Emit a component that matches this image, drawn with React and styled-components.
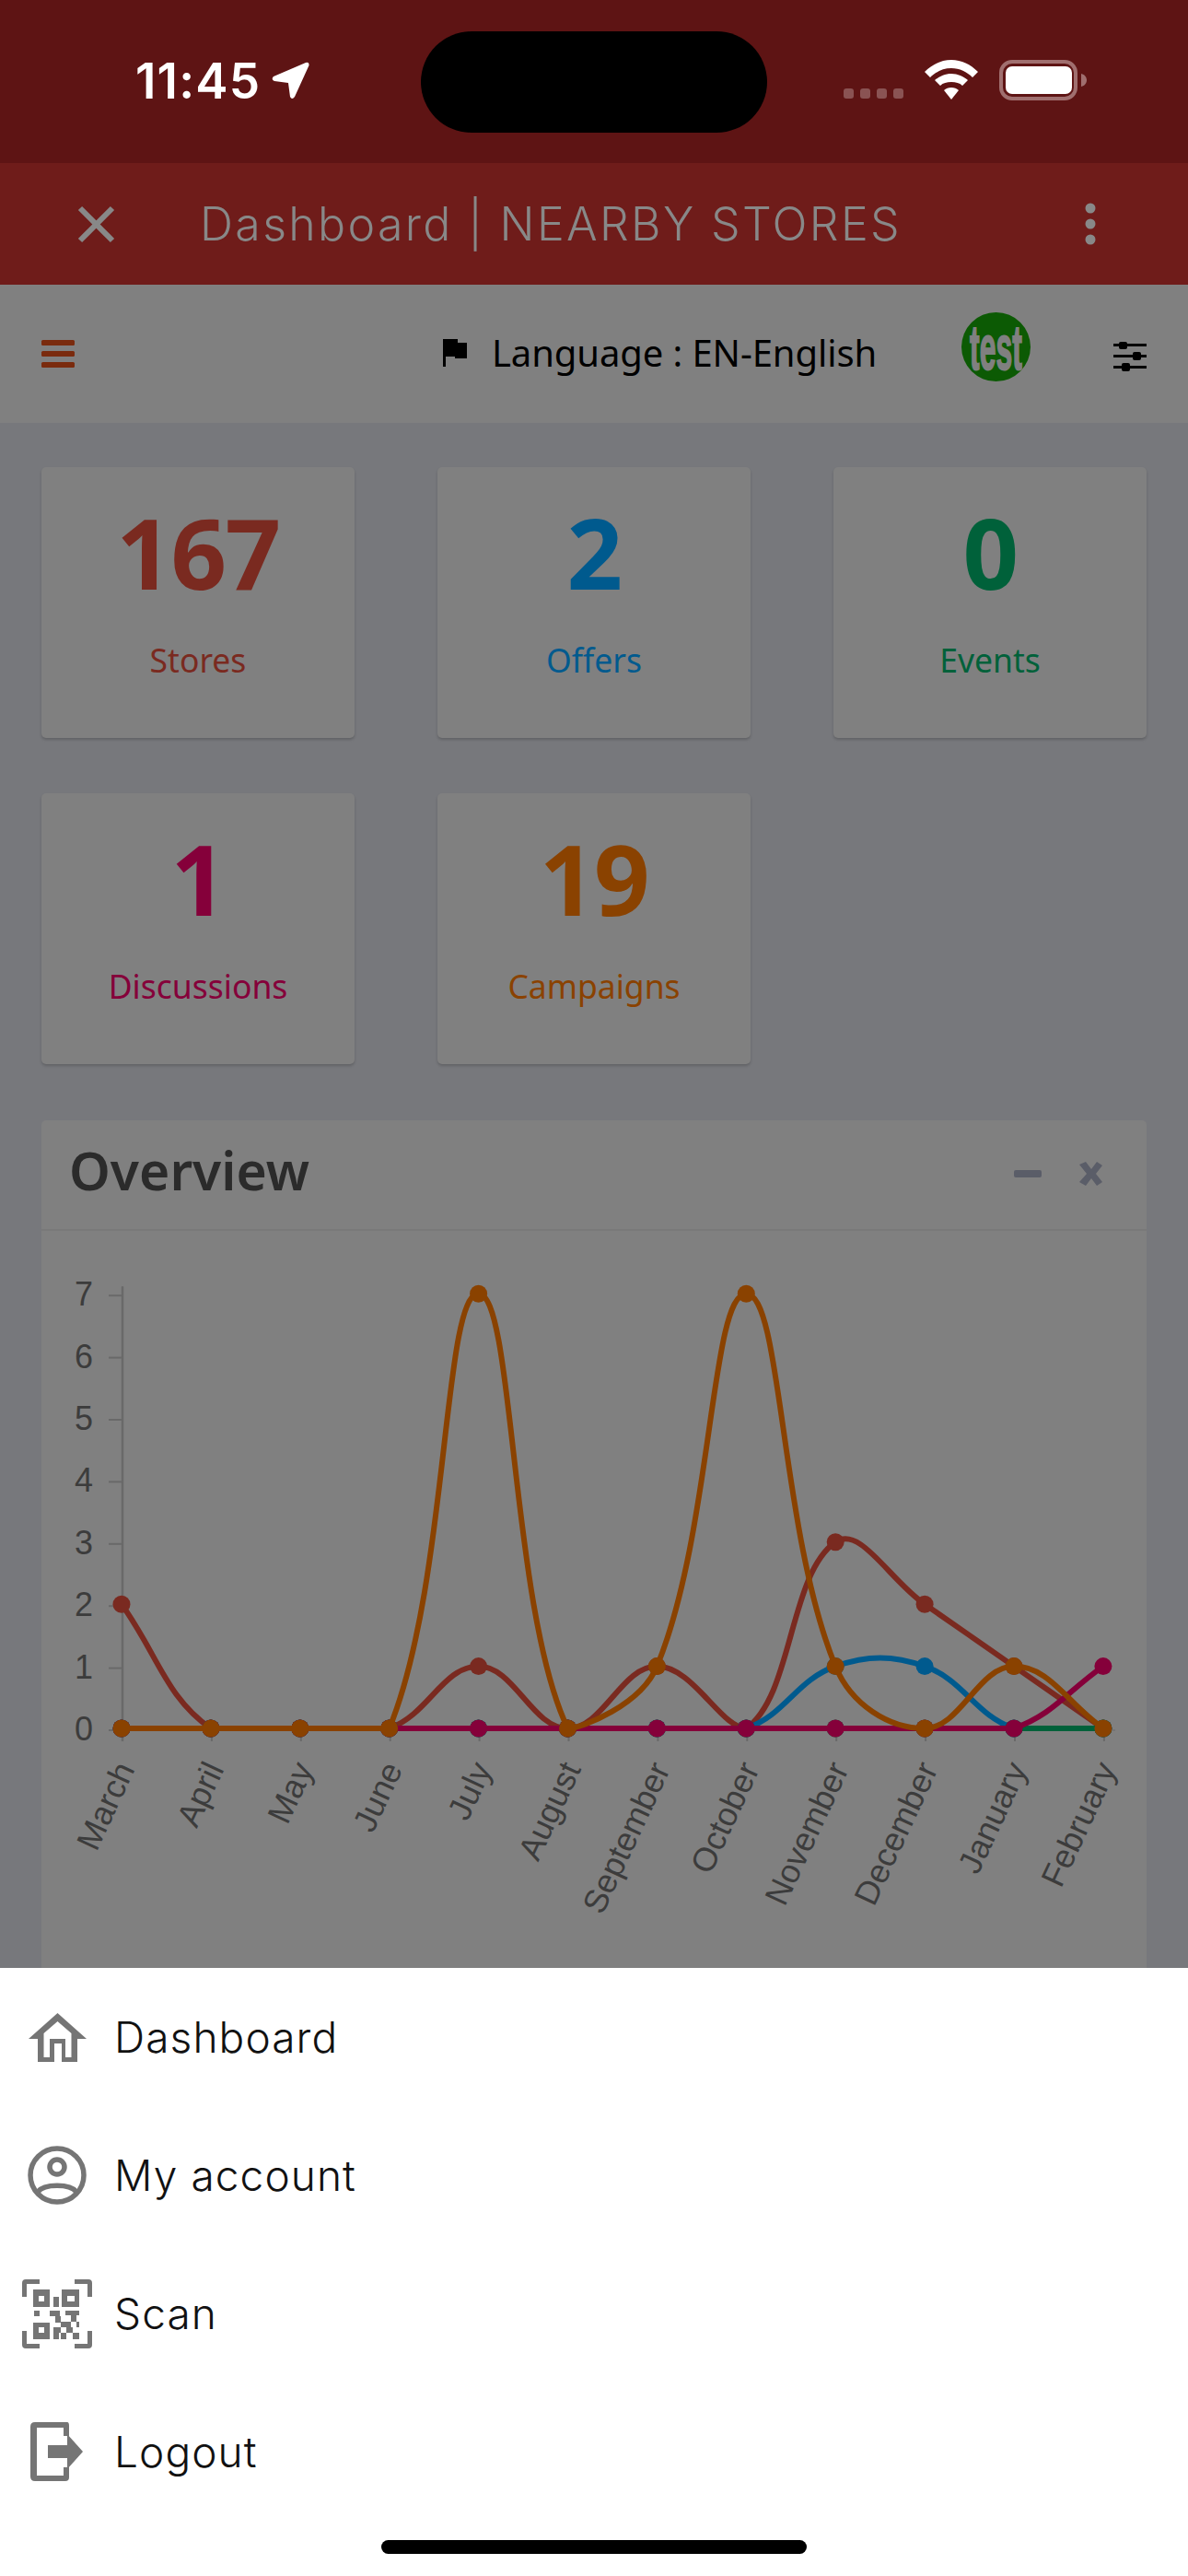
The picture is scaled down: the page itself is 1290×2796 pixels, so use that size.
import React from "react";
import styled, { createGlobalStyle } from "styled-components";

const GlobalStyle = createGlobalStyle`
  html, body {
    margin: 0;
    padding: 0;
    background: #77787c;
  }
  * {
    box-sizing: border-box;
  }
`;

const Screen = styled.div`
  width: 1290px;
  height: 2796px;
  position: relative;
  overflow: hidden;
  background: #77787c;
  font-family: "Noto Sans", sans-serif;
`;

const StatusBar = styled.div`
  height: 177px;
  background: #5e1414;
  display: flex;
  align-items: flex-start;
  color: #fff;
`;

const Time = styled.div`
  width: 310px;
  display: flex;
  align-items: center;
  gap: 12px;
  margin: 63px 0 0 147px;
  font-family: Inter, sans-serif;
  font-weight: 600;
  font-size: 53px;
  line-height: 50px;
  letter-spacing: 1.2px;
`;

const LocationArrow = styled.svg`
  width: 42px;
  height: 42px;
  margin-top: -1px;
`;

const Island = styled.div`
  width: 376px;
  height: 110px;
  margin-top: 34px;
  background: #000;
  border-radius: 55px;
`;

const SignalDots = styled.div`
  display: flex;
  gap: 7px;
  margin: 96px 0 0 83px;
`;

const SignalDot = styled.span`
  width: 11px;
  height: 11px;
  border-radius: 3px;
  background: #8a5353;
`;

const WifiIcon = styled.svg`
  width: 58px;
  height: 43px;
  margin: 65px 0 0 23px;
`;

const BatteryIcon = styled.svg`
  width: 95px;
  height: 44px;
  margin: 65px 0 0 23px;
`;

const AppBar = styled.div`
  height: 132px;
  background: #6f1c1a;
  display: flex;
  align-items: center;
  padding: 0 100px 0 84px;
  color: #888;
`;

const AppBarTitle = styled.div`
  flex: 1;
  margin-left: 92px;
  font-family: Inter, sans-serif;
  font-weight: 300;
  font-size: 50px;
  white-space: nowrap;
  letter-spacing: 2.35px;
`;

const TopBar = styled.div`
  height: 150px;
  background: #808080;
  display: flex;
  align-items: center;
  padding: 0 45px;
`;

const Hamburger = styled.div`
  flex: none;
  width: 36px;
  display: flex;
  flex-direction: column;
  gap: 6px;
`;

const HamburgerBar = styled.span`
  height: 6px;
  border-radius: 1.5px;
  background: #7a2b0e;
`;

const Language = styled.div`
  flex: none;
  width: 471px;
  display: flex;
  align-items: center;
  margin: -3px 0 0 400px;
  color: #000;
  font-size: 40px;
  letter-spacing: -0.1px;
  white-space: nowrap;
`;

const FlagIcon = styled.svg`
  flex: none;
  width: 27px;
  height: 30px;
  margin-right: 26px;
`;

const Avatar = styled.div`
  flex: none;
  width: 75px;
  height: 75px;
  margin: -15px 0 0 92px;
  border-radius: 50%;
  background: #0c5a04;
  color: #808080;
  display: flex;
  align-items: center;
  justify-content: center;
  overflow: hidden;
  font-family: "Liberation Sans", sans-serif;
  font-weight: 700;
  font-size: 68px;
  -webkit-text-stroke: 2px #808080;
`;

const AvatarText = styled.span`
  display: block;
  transform: scaleX(0.47);
`;

const SlidersIcon = styled.svg`
  flex: none;
  width: 36px;
  height: 32px;
  margin: 5px 0 0 90px;
`;

const Content = styled.div`
  padding: 48px 45px 0;
`;

const StatGrid = styled.div`
  display: grid;
  grid-template-columns: repeat(3, 340px);
  column-gap: 90px;
  row-gap: 60px;
`;

const StatCard = styled.div`
  height: 294px;
  padding-top: 33px;
  background: #808080;
  border-radius: 5px;
  box-shadow: 0 2px 3px rgba(0, 0, 0, 0.18);
  text-align: center;
  color: ${(props) => props.$color};
`;

const StatValue = styled.div`
  font-weight: 700;
  font-size: 106px;
  line-height: 118px;
  letter-spacing: -1.5px;
`;

const StatLabel = styled.div`
  margin-top: 34px;
  font-size: 35.5px;
  line-height: 48px;
`;

const OverviewCard = styled.div`
  height: 1000px;
  margin-top: 61px;
  background: #808080;
  border-radius: 5px;
`;

const OverviewHeader = styled.div`
  height: 120px;
  padding: 0 48px 10px 30px;
  display: flex;
  align-items: center;
  justify-content: space-between;
  border-bottom: 2px solid #797979;
`;

const OverviewTitle = styled.div`
  font-weight: 600;
  font-size: 57px;
  color: #2b2b2b;
`;

const HeaderTools = styled.svg`
  width: 96px;
  height: 26px;
  margin-top: 8px;
`;

const ChartSvg = styled.svg`
  display: block;
  width: 1200px;
  height: 800px;
`;

const AxisText = styled.text`
  font-family: "Liberation Sans", Arial, sans-serif;
  font-size: 36px;
  fill: #3c3c3c;
`;

const Sheet = styled.div`
  position: absolute;
  left: 0;
  right: 0;
  bottom: 0;
  height: 660px;
  background: #fff;
`;

const MenuRow = styled.div`
  height: 150px;
  display: flex;
  align-items: center;
`;

const MenuIconSlot = styled.div`
  width: 124px;
  height: 80px;
  display: flex;
  align-items: center;
  justify-content: center;
  color: #757575;
`;

const MenuLabel = styled.div`
  font-family: Inter, sans-serif;
  font-weight: 300;
  font-size: 46px;
  letter-spacing: 1.1px;
  color: #111;
`;

const HomeIndicator = styled.div`
  width: 462px;
  height: 15px;
  margin: 21px auto 0;
  background: #000;
  border-radius: 8px;
`;

// chart geometry, in coordinates of the card body
const CHART_LEFT = 87;
const CHART_STEP = 96.9;
const CHART_ZERO = 540;
const CHART_UNIT = 67.4;

const months = [
  "March", "April", "May", "June", "July", "August",
  "September", "October", "November", "December", "January", "February",
];

const series = [
  { color: "#7a2a20", data: [2, 0, 0, 0, 1, 0, 1, 0, 3, 2, 1, 0] },
  { color: "#005a8e", data: [0, 0, 0, 0, 0, 0, 0, 0, 1, 1, 0, 0] },
  { color: "#00613a", data: [0, 0, 0, 0, 0, 0, 0, 0, 0, 0, 0, 0] },
  { color: "#85003a", data: [0, 0, 0, 0, 0, 0, 0, 0, 0, 0, 0, 1] },
  { color: "#8a4200", data: [0, 0, 0, 0, 7, 0, 1, 7, 1, 0, 1, 0] },
];

const xAt = (i) => CHART_LEFT + i * CHART_STEP;
const yAt = (v) => CHART_ZERO - v * CHART_UNIT;

// same spline chart.js draws with tension 0.4
const splinePath = (data) => {
  const pts = data.map((v, i) => ({ x: xAt(i), y: yAt(v) }));
  const ctrl = pts.map((p, i) => {
    const prev = pts[i - 1] || p;
    const next = pts[i + 1] || p;
    const d01 = Math.hypot(p.x - prev.x, p.y - prev.y);
    const d12 = Math.hypot(next.x - p.x, next.y - p.y);
    const total = d01 + d12 || 1;
    const fa = (0.4 * d01) / total;
    const fb = (0.4 * d12) / total;
    return {
      inX: p.x - fa * (next.x - prev.x),
      inY: Math.min(p.y - fa * (next.y - prev.y), CHART_ZERO),
      outX: p.x + fb * (next.x - prev.x),
      outY: Math.min(p.y + fb * (next.y - prev.y), CHART_ZERO),
    };
  });
  let d = `M${pts[0].x} ${pts[0].y}`;
  for (let i = 1; i < pts.length; i++) {
    d += `C${ctrl[i - 1].outX} ${ctrl[i - 1].outY} ${ctrl[i].inX} ${ctrl[i].inY} ${pts[i].x} ${pts[i].y}`;
  }
  return d;
};

const OverviewChart = () => (
  <ChartSvg viewBox="0 0 1200 800">
    <path d={`M88 ${yAt(7) - 8}V${CHART_ZERO + 14}`} stroke="#696969" strokeWidth="2.5" />
    <path d={`M${CHART_LEFT - 14} ${CHART_ZERO + 2}H1166`} stroke="#757575" strokeWidth="2" />
    {[0, 1, 2, 3, 4, 5, 6, 7].map((v) => (
      <g key={v}>
        <path d={`M73 ${yAt(v) + 2}H88`} stroke="#696969" strokeWidth="2" />
        <AxisText x="36" y={yAt(v) + 13}>{v}</AxisText>
      </g>
    ))}
    {months.map((m, i) => (
      <g key={m}>
        <path d={`M${xAt(i) + 1} ${CHART_ZERO}v14`} stroke="#696969" strokeWidth="2" />
        <AxisText
          textAnchor="end"
          transform={`translate(${xAt(i) + 15} ${CHART_ZERO + 44}) rotate(-65)`}
        >
          {m}
        </AxisText>
      </g>
    ))}
    {series.map((s) => (
      <g key={s.color}>
        <path d={splinePath(s.data)} fill="none" stroke={s.color} strokeWidth="6" />
        {s.data.map((v, i) => (
          <circle key={i} cx={xAt(i)} cy={yAt(v)} r="9.5" fill={s.color} />
        ))}
      </g>
    ))}
  </ChartSvg>
);

const HomeIcon = () => (
  <svg width="63" height="53" viewBox="0 0 63 53" fill="currentColor">
    <path
      fillRule="evenodd"
      d="M31.5 0 63 28H53V53H36V33H28V53H10V28H0ZM31.5 9 16.5 22V48H23V28H40V48H46.5V22Z"
    />
  </svg>
);

const AccountIcon = () => (
  <svg width="64" height="64" viewBox="0 0 64 64" fill="none" stroke="currentColor">
    <circle cx="32" cy="32" r="29" strokeWidth="5.5" />
    <circle cx="32" cy="23" r="8" strokeWidth="5.5" />
    <path d="M11 50C18 41 46 41 53 50" strokeWidth="5.5" />
  </svg>
);

const ScanIcon = () => (
  <svg width="76" height="75" viewBox="0 0 76 75" fill="currentColor">
    <path d="M19 0H4Q0 0 0 4V19H5V5H19ZM57 0H72Q76 0 76 4V19H71V5H57ZM0 56H5V70H19V75H4Q0 75 0 71ZM76 56H71V70H57V75H72Q76 75 76 71Z" />
    <path
      fillRule="evenodd"
      d="M12 11H30V30H12ZM18 18V24H24V18ZM43 11H62V30H43ZM49 18V24H57V18ZM34 19H40V30H34ZM12 47H30V65H12ZM18 52V58H24V52Z"
    />
    <path d="M13 34H19V40H13ZM30 34H41V40H30ZM47 34H62V39H47ZM36 40H42V47H36ZM53 39H59V46H53ZM42 46H53V52H42ZM59 46H62V52H59ZM34 52H42V58H34ZM48 52H55V58H48ZM34 58H40V65H34ZM42 58H48V65H42ZM55 58H62V65H55Z" />
  </svg>
);

const LogoutIcon = () => (
  <svg width="58" height="64" viewBox="0 0 58 64" fill="currentColor">
    <path d="M5 0H40Q42 0 42 4V15H36V6H7V58H36V49H42V60Q42 64 38 64H5Q0 64 0 59V5Q0 0 5 0Z" />
    <path d="M19 25H40V13L57 32 40 51V39H19Z" />
  </svg>
);

const menuItems = [
  { label: "Dashboard", icon: <HomeIcon /> },
  { label: "My account", icon: <AccountIcon /> },
  { label: "Scan", icon: <ScanIcon /> },
  { label: "Logout", icon: <LogoutIcon /> },
];

const stats = [
  { value: "167", label: "Stores", color: "#7a2a20" },
  { value: "2", label: "Offers", color: "#005a8e" },
  { value: "0", label: "Events", color: "#00613a" },
  { value: "1", label: "Discussions", color: "#85003a" },
  { value: "19", label: "Campaigns", color: "#8a4200" },
];

const App = () => (
  <Screen>
    <GlobalStyle />
    <StatusBar>
      <Time>
        11:45
        <LocationArrow viewBox="0 0 42 42" fill="#fff">
          <path d="M37 1Q41 0 40.5 4L25 38Q22 42 20 38L18 23 3 21Q-1 19 2 16Z" />
        </LocationArrow>
      </Time>
      <Island />
      <SignalDots>
        <SignalDot />
        <SignalDot />
        <SignalDot />
        <SignalDot />
      </SignalDots>
      <WifiIcon viewBox="0 0 58 43" fill="#fff">
        <path d="M29 0C40 0 50 5 58 13L52 19C46 13 38 9 29 9S12 13 6 19L0 13C8 5 18 0 29 0Z" />
        <path d="M29 15C36 15 42 18 47 22L41 28C38 25 34 24 29 24S20 25 17 28L11 22C16 18 22 15 29 15Z" />
        <path d="M29 30C32 30 35 31 37 33L29 43 21 33C23 31 26 30 29 30Z" />
      </WifiIcon>
      <BatteryIcon viewBox="0 0 95 44">
        <rect x="2" y="2" width="81" height="40" rx="12" fill="none" stroke="#a06f6f" strokeWidth="4" />
        <rect x="7" y="7" width="72" height="30" rx="7" fill="#fff" />
        <path d="M89 15C93 16 95 19 95 22S93 28 89 29Z" fill="#a06f6f" />
      </BatteryIcon>
    </StatusBar>

    <AppBar>
      <svg width="41" height="41" viewBox="0 0 41 41" stroke="#888" strokeWidth="6">
        <path d="M3 3 38 38M38 3 3 38" />
      </svg>
      <AppBarTitle>Dashboard | NEARBY STORES</AppBarTitle>
      <svg width="12" height="46" viewBox="0 0 12 46" fill="#888">
        <circle cx="6" cy="6" r="5.5" />
        <circle cx="6" cy="23" r="5.5" />
        <circle cx="6" cy="40" r="5.5" />
      </svg>
    </AppBar>

    <TopBar>
      <Hamburger>
        <HamburgerBar />
        <HamburgerBar />
        <HamburgerBar />
      </Hamburger>
      <Language>
        <FlagIcon viewBox="0 0 27 30" fill="#000">
          <path d="M0 0H16V4H26V21H13V19H3V30H0Z" />
        </FlagIcon>
        Language : EN-English
      </Language>
      <Avatar>
        <AvatarText>test</AvatarText>
      </Avatar>
      <SlidersIcon viewBox="0 0 36 32" fill="#000">
        <path d="M0 2H36V5H0ZM0 14H36V17H0ZM0 26H36V29H0Z" />
        <rect x="6" y="0" width="9" height="8" rx="2" />
        <rect x="21" y="11" width="9" height="9" rx="2" />
        <rect x="9" y="23" width="9" height="9" rx="2" />
      </SlidersIcon>
    </TopBar>

    <Content>
      <StatGrid>
        {stats.map((s) => (
          <StatCard key={s.label} $color={s.color}>
            <StatValue>{s.value}</StatValue>
            <StatLabel>{s.label}</StatLabel>
          </StatCard>
        ))}
      </StatGrid>
      <OverviewCard>
        <OverviewHeader>
          <OverviewTitle>Overview</OverviewTitle>
          <HeaderTools viewBox="0 0 96 26" fill="#5a5d68">
            <rect x="0" y="9" width="30" height="8" rx="2" />
            <path d="M71 3 78 0 84 8 90 0 96 4 89 13 96 22 90 26 84 18 78 26 71 22 79 13Z" />
          </HeaderTools>
        </OverviewHeader>
        <OverviewChart />
      </OverviewCard>
    </Content>

    <Sheet>
      {menuItems.map((item) => (
        <MenuRow key={item.label}>
          <MenuIconSlot>{item.icon}</MenuIconSlot>
          <MenuLabel>{item.label}</MenuLabel>
        </MenuRow>
      ))}
      <HomeIndicator />
    </Sheet>
  </Screen>
);

export default App;
